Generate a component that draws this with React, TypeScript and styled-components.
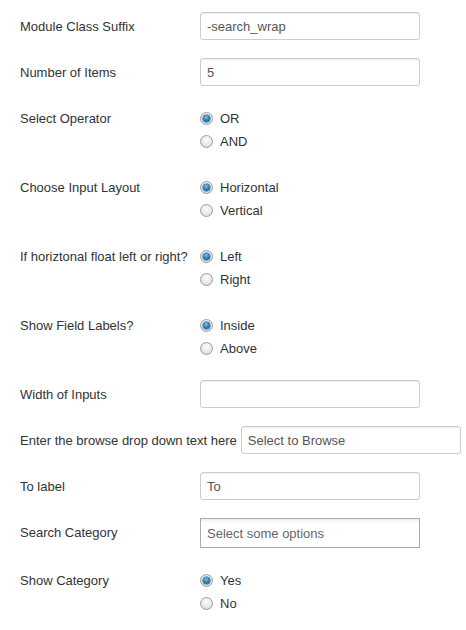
import styled, { createGlobalStyle } from 'styled-components';

const GlobalStyle = createGlobalStyle`
  html, body {
    margin: 0;
    padding: 0;
    background: #fff;
  }
  body {
    font-family: "Liberation Sans", Arial, sans-serif;
    font-size: 13px;
    color: #333;
  }
`;

const Form = styled.div`
  padding: 12px 20px 10px 20px;
`;

const ControlGroup = styled.div`
  display: flex;
  align-items: flex-start;
  margin-bottom: 18px;
`;

const Label = styled.label`
  flex-shrink: 0;
  min-width: 180px;
  padding: 6px 4px 0 0;
  line-height: 18px;
  white-space: nowrap;
  box-sizing: border-box;
`;

const Controls = styled.div<{ $radio?: boolean }>`
  padding: ${(p) => (p.$radio ? '3px 0 2px 0' : '0')};
`;

const TextInput = styled.input`
  box-sizing: border-box;
  width: 220px;
  height: 28px;
  padding: 4px 6px 3px 6px;
  border: 1px solid #ccc;
  border-radius: 3px;
  box-shadow: inset 0 1px 1px rgba(0, 0, 0, 0.075);
  font-family: "Liberation Sans", Arial, sans-serif;
  font-size: 13px;
  color: #555;
  background: #fff;
  outline: none;
`;

const ChosenBox = styled.div`
  box-sizing: border-box;
  width: 220px;
  height: 30px;
  padding: 0 6px;
  border: 1px solid #aaa;
  background: linear-gradient(to bottom, #eee 1%, #fff 15%);
  color: #666;
  line-height: 29px;
  font-size: 13px;
`;

const RadioItem = styled.div`
  display: flex;
  align-items: center;
  height: 23px;
  gap: 7px;
`;

const RadioDot = styled.span<{ $checked?: boolean }>`
  position: relative;
  width: 13px;
  height: 13px;
  box-sizing: border-box;
  border-radius: 50%;
  border: 1px solid #9c9c9c;
  background: radial-gradient(circle at 50% 35%, #fdfdfd 0%, #e6e6e6 60%, #cfcfcf 100%);

  &::after {
    content: '';
    display: ${(p) => (p.$checked ? 'block' : 'none')};
    position: absolute;
    left: 2px;
    top: 2px;
    width: 7px;
    height: 7px;
    border-radius: 50%;
    background: radial-gradient(circle at 45% 35%, #7cc4f0 0%, #2a86c4 45%, #134d78 100%);
    box-shadow: 0 0 0 0.5px #1a4d73;
  }
`;

const RadioText = styled.span`
  color: #333;
`;

const TextRow = ({ label, value, placeholder }: { label: string; value?: string; placeholder?: string }) => (
  <ControlGroup>
    <Label>{label}</Label>
    <Controls>
      <TextInput defaultValue={value} placeholder={placeholder} />
    </Controls>
  </ControlGroup>
);

const RadioRow = ({ label, options }: { label: string; options: string[] }) => (
  <ControlGroup>
    <Label>{label}</Label>
    <Controls $radio>
      {options.map((o, i) => (
        <RadioItem key={o}>
          <RadioDot $checked={i === 0} />
          <RadioText>{o}</RadioText>
        </RadioItem>
      ))}
    </Controls>
  </ControlGroup>
);

const App = () => {
  return (
    <>
      <GlobalStyle />
      <Form>
        <TextRow label="Module Class Suffix" value="-search_wrap" />
        <TextRow label="Number of Items" value="5" />
        <RadioRow label="Select Operator" options={['OR', 'AND']} />
        <RadioRow label="Choose Input Layout" options={['Horizontal', 'Vertical']} />
        <RadioRow label="If horiztonal float left or right?" options={['Left', 'Right']} />
        <RadioRow label="Show Field Labels?" options={['Inside', 'Above']} />
        <TextRow label="Width of Inputs" value="" />
        <TextRow label="Enter the browse drop down text here" value="Select to Browse" />
        <TextRow label="To label" value="To" />
        <ControlGroup>
          <Label>Search Category</Label>
          <Controls>
            <ChosenBox>Select some options</ChosenBox>
          </Controls>
        </ControlGroup>
        <RadioRow label="Show Category" options={['Yes', 'No']} />
      </Form>
    </>
  );
};

export default App;
